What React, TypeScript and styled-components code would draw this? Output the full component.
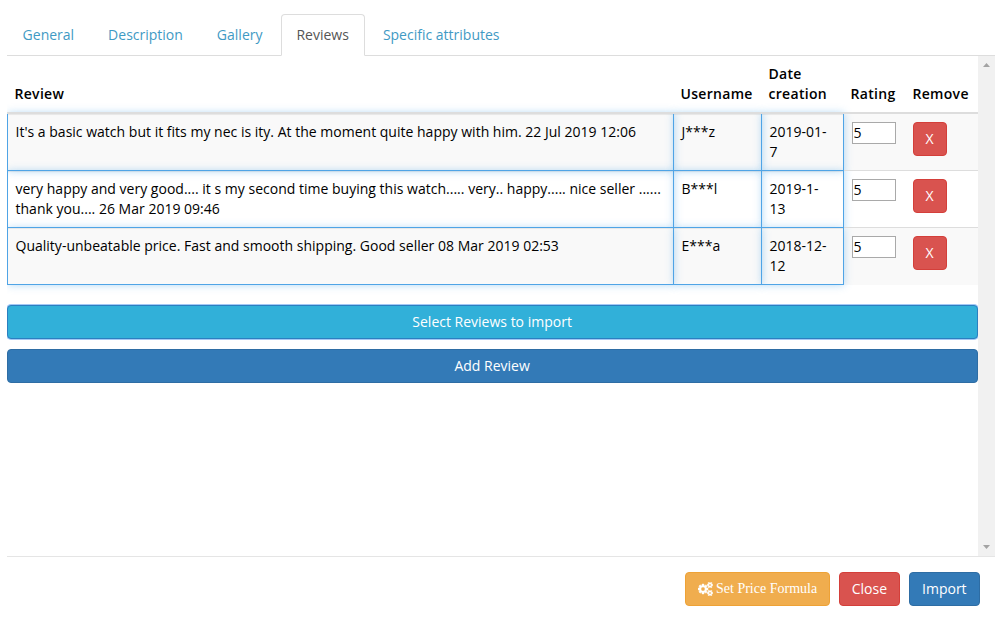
import React from "react";
import styled, { createGlobalStyle, css } from "styled-components";

const GlobalStyle = createGlobalStyle`
  *, *::before, *::after { box-sizing: border-box; }
  body {
    margin: 0;
    background: #fff;
    color: #000;
    font: 14px/20px "Open Sans", sans-serif;
    overflow: hidden;
  }
`;

const Dialog = styled.div`
  display: flex;
  flex-direction: column;
  width: 988px;
  margin: 14px 0 0 7px;
`;

const Tabs = styled.nav`
  display: flex;
  gap: 2px;
  height: 42px;
  border-bottom: 1px solid #ddd;
`;

const Tab = styled.a<{ $active?: boolean }>`
  height: 42px;
  padding: 10px 15.4px 10px 14.6px;
  border: 1px solid transparent;
  border-radius: 4px 4px 0 0;
  color: #3f9ac4;
  text-decoration: none;
  white-space: nowrap;
  ${(p) =>
    p.$active &&
    css`
      color: #555;
      background: #fff;
      border-color: #ddd #ddd #fff;
    `}
`;

const ScrollPane = styled.div`
  display: flex;
  height: 500px;
`;

const Content = styled.div`
  flex: 1;
  min-width: 0;
  overflow: hidden;
`;

const ScrollTrack = styled.div`
  display: flex;
  flex-direction: column;
  justify-content: space-between;
  align-items: center;
  width: 17px;
  padding: 7px 0;
  background: #f1f1f1;
`;

const ScrollArrow = styled.svg`
  display: block;
  width: 7px;
  height: 4px;
  fill: #a3a3a3;
`;

const ReviewTable = styled.table`
  width: 971px;
  margin: 0 0 20px;
  table-layout: fixed;
  border-collapse: collapse;
  border-spacing: 0;
`;

const HeadCell = styled.th`
  padding: 8px 8px 8px 7px;
  border-bottom: 2px solid #ddd;
  font-weight: 600;
  letter-spacing: 0.3px;
  text-align: left;
  vertical-align: bottom;
  &:last-child { padding-left: 8px; }
`;

const Row = styled.tr`
  &:nth-child(odd) { background: #f9f9f9; }
`;

const Cell = styled.td<{ $editable?: boolean }>`
  height: 57px;
  padding: 8px;
  border-top: 1px solid #ddd;
  vertical-align: top;
  ${(p) =>
    p.$editable &&
    css`
      padding-left: 7.5px;
      border: 1px solid #4fa4e6;
      box-shadow: inset 0 1px 1px rgba(0, 0, 0, 0.075), 0 0 8px rgba(82, 168, 236, 0.45);
      letter-spacing: 0.01px;
    `}
`;

const DateCell = styled(Cell)`
  padding-right: 11px;
`;

const RatingInput = styled.input`
  display: block;
  width: 44px;
  height: 22px;
  padding: 0 1px 1px 0.5px;
  border: 1px solid #a9a9a9;
  background: #fff;
  color: #000;
  font: 14px/19px "Open Sans", sans-serif;
`;

const tones = {
  primary: ["#337ab7", "#2e6da4"],
  info: ["#31b0d9", "#2b7fc0"],
  danger: ["#d9534f", "#d43f3a"],
  warning: ["#f0ad4e", "#eea236"],
};

const Button = styled.button<{ $tone: keyof typeof tones; $block?: boolean; $focused?: boolean }>`
  display: ${(p) => (p.$block ? "block" : "inline-flex")};
  align-items: center;
  justify-content: center;
  width: ${(p) => (p.$block ? "100%" : "auto")};
  height: 34px;
  margin: 0;
  padding: 6px 12.4px 6px 11.6px;
  border: 1px solid ${(p) => tones[p.$tone][1]};
  border-radius: 4px;
  background: ${(p) => tones[p.$tone][0]};
  color: #fff;
  font: 14px/20px "Open Sans", sans-serif;
  white-space: nowrap;
  ${(p) => p.$focused && "box-shadow: 0 0 0 1px #a3c8f5;"}
`;

const BlockButtons = styled.div`
  display: flex;
  flex-direction: column;
  gap: 10px;
`;

const RemoveButton = styled(Button)`
  display: flex;
  width: 34px;
  padding: 6px 0;
`;

const FormulaButton = styled(Button)`
  gap: 3.5px;
  padding: 6px 12px;
  font-family: "Liberation Serif", serif;
`;

const Footer = styled.footer`
  display: flex;
  justify-content: flex-end;
  gap: 9px;
  padding: 15px;
  border-top: 1px solid #e5e5e5;
`;

const smallGear =
  "v-140q0 -16 -149 -31q-12 -27 -30 -52q51 -113 51 -138q0 -4 -4 -7q-122 -71 -124 -71q-8 0 -46 47t-52 68q-20 -2 -30 -2t-30 2q-14 -21 -52 -68t-46 -47q-2 0 -124 71q-4 3 -4 7q0 25 51 138q-18 25 -30 52q-149 15 -149 31v140q0 16 149 31q13 29 30 52q-51 113 -51 138q0 4 4 7q4 2 35 20t59 34t30 16q8 0 46 -46.5t52 -67.5q20 2 30 2t30 -2q51 71 92 112l6 2q4 0 124 -70q4 -3 4 -7q0 -25 -51 -138q17 -23 30 -52q149 -15 149 -31z";
const smallHole = "q0 -52 -38 -90t-90 -38t-90 38t-38 90q0 53 37.5 90.5t90.5 37.5t90.5 -37.5t37.5 -90.5z";
const largeGear =
  "M896 640q0 -106 -75 -181t-181 -75t-181 75t-75 181t75 181t181 75t181 -75t75 -181zM1280 731v-185q0 -10 -7 -19.5t-16 -10.5l-155 -24q-11 -35 -32 -76q34 -48 90 -115q7 -11 7 -20q0 -12 -7 -19q-23 -30 -82.5 -89.5t-78.5 -59.5q-11 0 -21 7l-115 90q-37 -19 -77 -31q-11 -108 -23 -155q-7 -24 -30 -24h-186q-11 0 -20 7.5t-10 17.5l-23 153q-34 10 -75 31l-118 -89q-7 -7 -20 -7q-11 0 -21 8q-144 133 -144 160q0 9 7 19q10 14 41 53t47 61q-23 44 -35 82l-152 24q-10 1 -17 9.5t-7 19.5v185q0 10 7 19.5t16 10.5l155 24q11 35 32 76q-34 48 -90 115q-7 11 -7 20q0 12 7 20q22 30 82 89t79 59q11 0 21 -7l115 -90q34 18 77 32q11 108 23 154q7 24 30 24h186q11 0 20 -7.5t10 -17.5l23 -153q34 -10 75 -31l118 89q8 7 20 7q11 0 21 -8q144 -133 144 -160q0 -9 -7 -19q-12 -16 -42 -54t-45 -60q23 -48 34 -82l152 -23q10 -2 17 -10.5t7 -19.5z";

const CogsIcon = () => (
  <svg
    width="15"
    height="14"
    viewBox="0 -1536 1920 1792"
    fill="currentColor"
    fillRule="evenodd"
    stroke="currentColor"
    strokeWidth="60"
  >
    <path
      transform="scale(1 -1)"
      d={`${largeGear}M1664 128${smallHole}M1664 1152${smallHole}M1920 198${smallGear}M1920 1222${smallGear}`}
    />
  </svg>
);

const tabs = ["General", "Description", "Gallery", "Reviews", "Specific attributes"];

const reviews = [
  {
    text: "It's a basic watch but it fits my nec is ity. At the moment quite happy with him. 22 Jul 2019 12:06",
    user: "J***z",
    date: "2019-01-7",
    rating: 5,
  },
  {
    text: "very happy and very good.... it s my second time buying this watch..... very.. happy..... nice seller ...... thank you.... 26 Mar 2019 09:46",
    user: "B***l",
    date: "2019-1-13",
    rating: 5,
  },
  {
    text: "Quality-unbeatable price. Fast and smooth shipping. Good seller 08 Mar 2019 02:53",
    user: "E***a",
    date: "2018-12-12",
    rating: 5,
  },
];

const columnWidths = [666, 88, 82, 61, 74];

export default function App() {
  return (
    <>
      <GlobalStyle />
      <Dialog>
        <Tabs>
          {tabs.map((name) => (
            <Tab key={name} $active={name === "Reviews"}>
              {name}
            </Tab>
          ))}
        </Tabs>
        <ScrollPane>
          <Content>
            <ReviewTable>
              <colgroup>
                {columnWidths.map((w, i) => (
                  <col key={i} width={w} />
                ))}
              </colgroup>
              <thead>
                <tr>
                  <HeadCell>Review</HeadCell>
                  <HeadCell>Username</HeadCell>
                  <HeadCell>Date creation</HeadCell>
                  <HeadCell>Rating</HeadCell>
                  <HeadCell>Remove</HeadCell>
                </tr>
              </thead>
              <tbody>
                {reviews.map((r) => (
                  <Row key={r.user}>
                    <Cell $editable>{r.text}</Cell>
                    <Cell $editable>{r.user}</Cell>
                    <DateCell $editable>{r.date}</DateCell>
                    <Cell>
                      <RatingInput defaultValue={r.rating} />
                    </Cell>
                    <Cell>
                      <RemoveButton $tone="danger">X</RemoveButton>
                    </Cell>
                  </Row>
                ))}
              </tbody>
            </ReviewTable>
            <BlockButtons>
              <Button $tone="info" $block $focused>
                Select Reviews to import
              </Button>
              <Button $tone="primary" $block>
                Add Review
              </Button>
            </BlockButtons>
          </Content>
          <ScrollTrack>
            <ScrollArrow viewBox="0 0 7 4">
              <path d="M0 4L3.5 0L7 4Z" />
            </ScrollArrow>
            <ScrollArrow viewBox="0 0 7 4">
              <path d="M0 0L3.5 4L7 0Z" />
            </ScrollArrow>
          </ScrollTrack>
        </ScrollPane>
        <Footer>
          <FormulaButton $tone="warning">
            <CogsIcon />
            Set Price Formula
          </FormulaButton>
          <Button $tone="danger">Close</Button>
          <Button $tone="primary">Import</Button>
        </Footer>
      </Dialog>
    </>
  );
}
